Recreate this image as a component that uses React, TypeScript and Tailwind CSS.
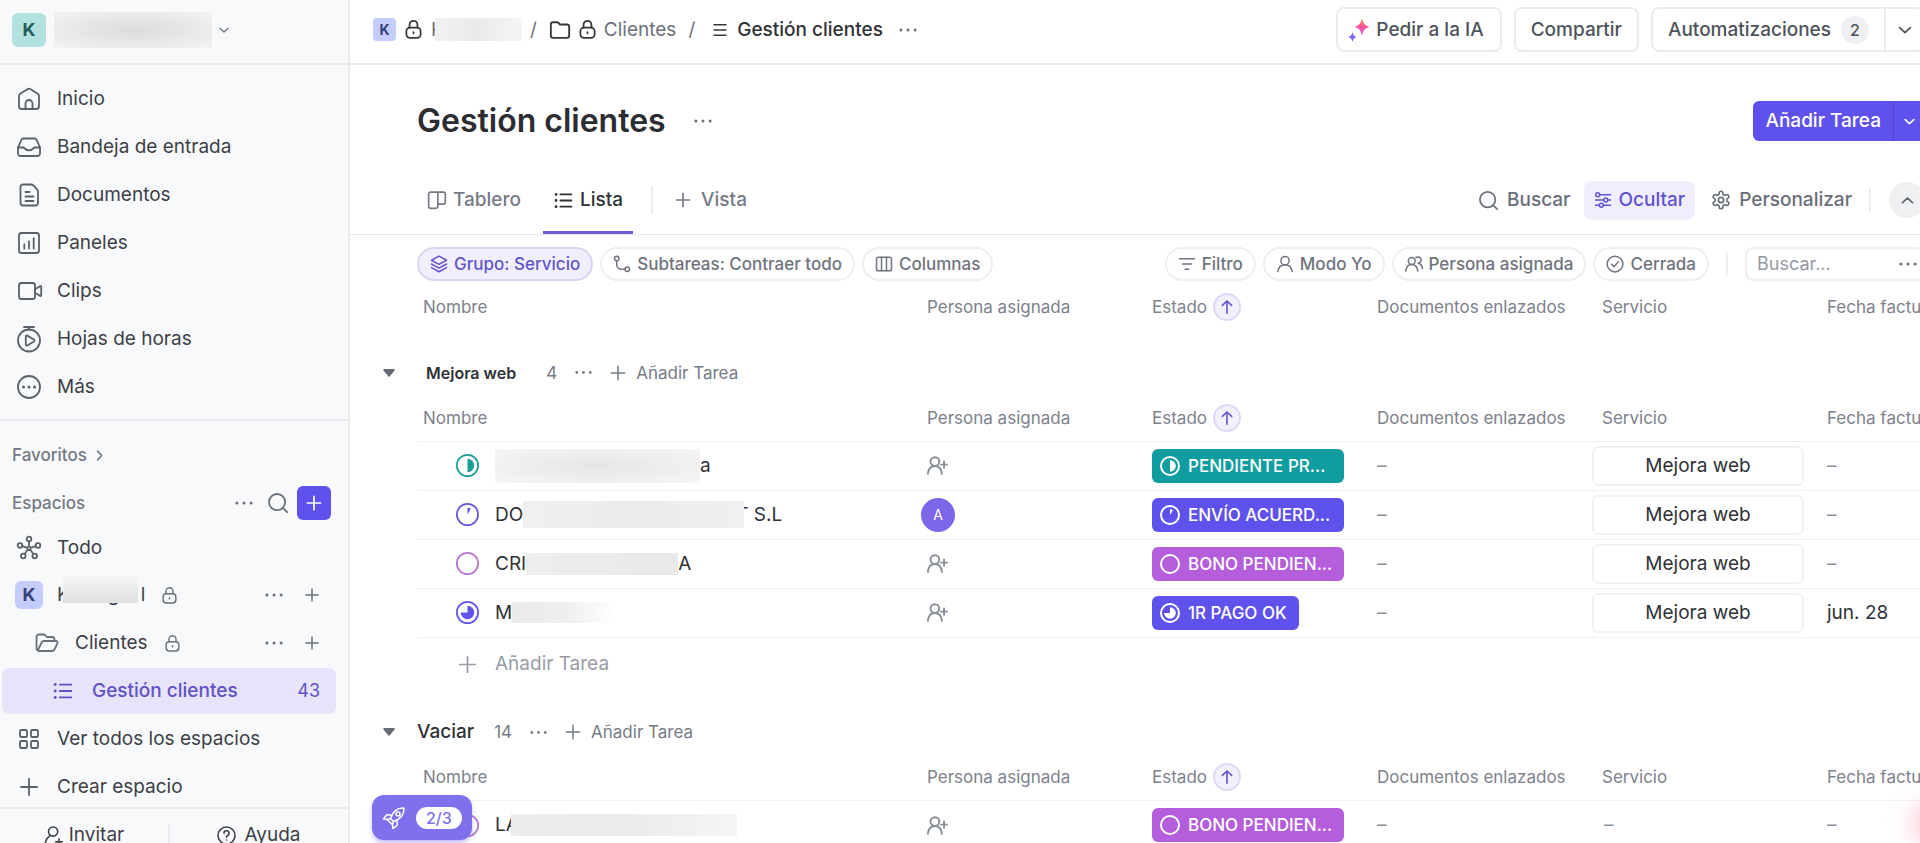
import { ReactNode } from 'react';

const ICONS: Record<string, ReactNode> = {
  home: (
    <>
      <path d="M2 9a2.6 2.6 0 0 1 1.2-2.2l7.2-4.6a3 3 0 0 1 3.2 0l7.2 4.6A2.6 2.6 0 0 1 22 9v10.3a2.7 2.7 0 0 1-2.7 2.7H4.7A2.7 2.7 0 0 1 2 19.3z" />
      <path d="M8.5 22v-5.5a3.5 3.5 0 0 1 7 0V22" />
    </>
  ),
  inbox: (
    <>
      <path d="M1 12.5 4.2 5.1A2.6 2.6 0 0 1 6.6 3.5h10.8a2.6 2.6 0 0 1 2.4 1.6L23 12.5v6a2.5 2.5 0 0 1-2.5 2.5h-17A2.5 2.5 0 0 1 1 18.5z" />
      <path d="M1 12.5h5c1.3 0 1.6.7 2.4 1.5.9.9 2 1.3 3.6 1.3s2.7-.4 3.6-1.3c.8-.8 1.1-1.5 2.4-1.5h5" />
    </>
  ),
  doc: (
    <>
      <path d="M6 1.5h8.2a3 3 0 0 1 2.1.9l3.8 4a3 3 0 0 1 .9 2.1V20a2.5 2.5 0 0 1-2.5 2.5H6A2.5 2.5 0 0 1 3.5 20V4A2.5 2.5 0 0 1 6 1.5z" />
      <path d="M8.5 9h4M8.5 13.5h8M8.5 18h8" />
    </>
  ),
  chart: (
    <>
      <rect x="2" y="2" width="20" height="20" rx="2.5" />
      <path d="M7.3 13.5v4M12 10.5v7M16.7 7.2v10.3" />
    </>
  ),
  video: (
    <>
      <rect x="2" y="4" width="16" height="16" rx="2.5" />
      <path d="M18 10.2 23 7.2a.7.7 0 0 1 1.2.6v8.4a.7.7 0 0 1-1.2.6L18 13.8z" />
    </>
  ),
  timer: (
    <>
      <circle cx="12" cy="13.5" r="11" />
      <path d="M7 0h10M12 0v2.5M8.8 9.5a1 1 0 0 1 1.5-.9l6.6 4a1 1 0 0 1 0 1.8l-6.6 4a1 1 0 0 1-1.5-.9z" />
    </>
  ),
  more: (
    <>
      <circle cx="12" cy="12" r="11" />
      <path d="M6.5 12h.01M12 12h.01M17.5 12h.01" strokeWidth="3" />
    </>
  ),
  hub: (
    <>
      <circle cx="12" cy="3" r="2.3" />
      <circle cx="3" cy="9.5" r="2.3" />
      <circle cx="21" cy="9.5" r="2.3" />
      <circle cx="6.3" cy="20" r="2.3" />
      <circle cx="17.7" cy="20" r="2.3" />
      <path d="M12 5.3v5M5.2 10.2l4.8 1.5M18.8 10.2 14 11.7M7.5 18l3.3-4.3M16.5 18l-3.3-4.3M12 10.3l2 1.4-.8 2.3h-2.4l-.8-2.3z" />
    </>
  ),
  grid: (
    <>
      <rect x="3" y="3" width="7" height="7" rx="1.3" />
      <rect x="14" y="3" width="7" height="7" rx="1.3" />
      <rect x="3" y="14" width="7" height="7" rx="1.3" />
      <rect x="14" y="14" width="7" height="7" rx="1.3" />
    </>
  ),
  plus: <path d="M12 4v16M4 12h16" />,
  list: (
    <>
      <path d="M8.5 5H21M8.5 12H21M8.5 19H21" />
      <path d="M3.5 5h.01M3.5 12h.01M3.5 19h.01" strokeWidth="3.2" />
    </>
  ),
  lines: <path d="M4 5h16M4 12h16M4 19h16" />,
  folder: <path d="M2 6a2.5 2.5 0 0 1 2.5-2.5h4.2c.8 0 1.5.4 2 1l1 1.5h7.8A2.5 2.5 0 0 1 22 8.5V18a2.5 2.5 0 0 1-2.5 2.5h-15A2.5 2.5 0 0 1 2 18z" />,
  folderOpen: (
    <path d="M2.7 19.5A2.5 2.5 0 0 1 1.5 17.3V6A2.5 2.5 0 0 1 4 3.5h4.5c.8 0 1.5.4 2 1L11.7 6H17a2.5 2.5 0 0 1 2.5 2.5V10M2.7 19.5l4-8A2.6 2.6 0 0 1 9 10h12a1.6 1.6 0 0 1 1.4 2.3l-3 6.2A2.6 2.6 0 0 1 17 20H4.5c-.8 0-1.4-.1-1.8-.5z" />
  ),
  lock: (
    <>
      <rect x="3" y="9.5" width="18" height="13" rx="4.5" />
      <path d="M7 9.5V6a5 5 0 0 1 10 0v3.5M12 15.2v1.6" />
    </>
  ),
  search: (
    <>
      <circle cx="11" cy="11" r="8.8" />
      <path d="m17.5 17.5 4.5 4.5" />
    </>
  ),
  dots: <path d="M2.5 12h.01M12 12h.01M21.5 12h.01" strokeWidth="4" />,
  down: <path d="m4 8.5 8 7.5 8-7.5" />,
  up: <path d="m4 15.5 8-7.5 8 7.5" />,
  right: <path d="m8.5 4 7.5 8-7.5 8" />,
  board: <path d="M4.5 2.5h15A2.5 2.5 0 0 1 22 5v9.5a2.5 2.5 0 0 1-2.5 2.5H13M4.5 2.5A2.5 2.5 0 0 0 2 5v14.5A2.5 2.5 0 0 0 4.5 22h6a2.5 2.5 0 0 0 2.5-2.5v-17" />,
  layers: (
    <>
      <path d="m12 1.5 10 5.5-10 5.5L2 7z" />
      <path d="m2 12 10 5.5L22 12M2 16.8l10 5.5 10-5.5" />
    </>
  ),
  subtasks: (
    <>
      <circle cx="5" cy="4.5" r="3" />
      <circle cx="19" cy="19" r="3" />
      <path d="M5 7.5V13a6 6 0 0 0 6 6h5" />
    </>
  ),
  columns: (
    <>
      <rect x="2" y="3" width="20" height="18" rx="2.5" />
      <path d="M8.7 3v18M15.3 3v18" />
    </>
  ),
  filter: <path d="M2 5h20M6 12h12M9.5 19h5" />,
  user: (
    <>
      <circle cx="12" cy="7.5" r="5.5" />
      <path d="M2.5 22c.8-5.5 4.5-9 9.5-9s8.7 3.5 9.5 9" />
    </>
  ),
  users: (
    <>
      <circle cx="9" cy="8" r="4.6" />
      <path d="M1 21.5c.5-5 3.5-8.8 8-8.8s7.5 3.8 8 8.8M14.5 3.5a4.3 4.3 0 1 1 3.2 7.6c3 .6 5 3.4 5.5 7" />
    </>
  ),
  userPlus: (
    <>
      <circle cx="9" cy="7.5" r="5" />
      <path d="M1 21.5c.5-5.5 3.5-9 8-9s7.5 3.5 8 9M19.5 7.5v7M16 11h7" />
    </>
  ),
  invite: (
    <>
      <circle cx="11.5" cy="7" r="5.8" />
      <path d="M12 22.5H3.5c-1.5 0-2-1-1.5-2.5C3 16.5 5.5 13.5 8 12M19 16v8M15 20h8" />
    </>
  ),
  help: (
    <>
      <circle cx="12" cy="12" r="10.8" />
      <path d="M8.8 9.2a3.2 3.2 0 1 1 4.6 2.9c-1 .5-1.4 1.1-1.4 2.2M12 17.6h.01" />
    </>
  ),
  check: (
    <>
      <circle cx="12" cy="12" r="10.5" />
      <path d="m7.5 12.3 3.2 3.2 5.8-6.5" />
    </>
  ),
  sliders: (
    <>
      <path d="M8 5h14M2 12h11M18.5 12H22M2 19h5M12.5 19H22" />
      <circle cx="5" cy="5" r="2.6" />
      <circle cx="15.8" cy="12" r="2.6" />
      <circle cx="9.8" cy="19" r="2.6" />
    </>
  ),
  gear: (
    <>
      <path d="M12.2 1.5h-.4a2 2 0 0 0-2 2v.7a2 2 0 0 1-1 1.7l-.4.2a2 2 0 0 1-2 0l-.6-.3a2 2 0 0 0-2.7.7l-.3.5a2 2 0 0 0 .7 2.7l.5.4a2 2 0 0 1 1 1.7v.5a2 2 0 0 1-1 1.7l-.5.3a2 2 0 0 0-.7 2.7l.3.5a2 2 0 0 0 2.7.7l.6-.3a2 2 0 0 1 2 0l.4.3a2 2 0 0 1 1 1.7v.6a2 2 0 0 0 2 2h.4a2 2 0 0 0 2-2v-.6a2 2 0 0 1 1-1.7l.4-.3a2 2 0 0 1 2 0l.6.3a2 2 0 0 0 2.7-.7l.3-.5a2 2 0 0 0-.7-2.7l-.5-.3a2 2 0 0 1-1-1.7v-.5a2 2 0 0 1 1-1.7l.5-.4a2 2 0 0 0 .7-2.7l-.3-.5a2 2 0 0 0-2.7-.7l-.6.3a2 2 0 0 1-2 0l-.4-.2a2 2 0 0 1-1-1.7v-.7a2 2 0 0 0-2-2z" />
      <circle cx="12" cy="12" r="3.2" />
    </>
  ),
  arrowUp: <path d="M12 21.5V3M5 9.5 12 3l7 6.5" />,
  rocket: (
    <>
      <path d="M8.5 12.5C10.5 6.5 15 2 21.3 2.1a.7.7 0 0 1 .7.7C22 9 17.5 13.5 11.5 15.5z" />
      <circle cx="16" cy="8" r="2" />
      <path d="M9.8 9.2 6 8.7a2 2 0 0 0-1.8.8L1.5 13l3.7.5M14.8 14.2l.5 3.8a2 2 0 0 1-.8 1.8L11 22.5l-.5-3.7M8.5 12.5l-3.3 1 5.3 5.3 1-3.3" />
    </>
  ),
};

function Icon({ name, size = 24, stroke = 2, className = '' }: { name: string; size?: number; stroke?: number; className?: string }) {
  return (
    <svg
      width={size}
      height={size}
      viewBox="0 0 24 24"
      fill="none"
      stroke="currentColor"
      strokeWidth={stroke}
      strokeLinecap="round"
      strokeLinejoin="round"
      className={`shrink-0 overflow-visible ${className}`}
      aria-hidden="true"
    >
      {ICONS[name]}
    </svg>
  );
}

// Pie slice used by the status icons
const SLICES: Record<string, string> = {
  half: 'M12 5a7 7 0 0 1 0 14z',
  start: 'M12 12V5a7 7 0 0 1 3.5 1z',
  most: 'M12 12V5a7 7 0 1 1-7 7z',
  empty: '',
};

function StatusIcon({ slice, size, stroke, className = '' }: { slice: string; size: number; stroke: number; className?: string }) {
  return (
    <svg width={size} height={size} viewBox="0 0 24 24" className={`shrink-0 ${className}`} aria-hidden="true">
      <circle cx="12" cy="12" r={12 - stroke / 2} fill="none" stroke="currentColor" strokeWidth={stroke} />
      <path d={SLICES[slice]} fill="currentColor" />
    </svg>
  );
}

const NAV = [
  { icon: 'home', label: 'Inicio' },
  { icon: 'inbox', label: 'Bandeja de entrada' },
  { icon: 'doc', label: 'Documentos' },
  { icon: 'chart', label: 'Paneles' },
  { icon: 'video', label: 'Clips' },
  { icon: 'timer', label: 'Hojas de horas' },
  { icon: 'more', label: 'Más' },
];

const STATUS = {
  pendiente: { label: 'PENDIENTE PR...', slice: 'half', pill: 'w-[192px] bg-[#109d9f]', text: 'text-[#1a9c97]' },
  envio: { label: 'ENVÍO ACUERD...', slice: 'start', pill: 'w-[192px] bg-[#5f52ec]', text: 'text-[#6457d8]' },
  bono: { label: 'BONO PENDIEN...', slice: 'empty', pill: 'w-[192px] bg-[#b45edc]', text: 'text-[#b574cf]' },
  pago: { label: '1R PAGO OK', slice: 'most', pill: 'bg-[#5f52ec]', text: 'text-[#6153ea]' },
};

type Task = {
  start: string;
  end?: string;
  blur: string;
  status: keyof typeof STATUS;
  avatar?: string;
  servicio?: string;
  fecha?: string;
};

const MEJORA: Task[] = [
  { start: '', end: 'a', blur: 'w-[205px] h-[34px] bg-radial from-[#e6e6e7] to-[#f6f6f7]', status: 'pendiente', servicio: 'Mejora web' },
  { start: 'DO', end: 'T S.L', blur: 'w-[221px] h-[27px] -mr-2 bg-linear-to-r from-[#f0f0f1] via-[#ebebec] to-[#f0f0f1]', status: 'envio', avatar: 'A', servicio: 'Mejora web' },
  { start: 'CRI', end: 'A', blur: 'w-[152px] h-[22px] bg-linear-to-r from-[#eeeeef] via-[#ebebed] to-[#e9e9ea]', status: 'bono', servicio: 'Mejora web' },
  { start: 'M', blur: 'w-[106px] h-[21px] bg-linear-to-r from-[#eaeaeb] via-[#efeff0] to-white', status: 'pago', servicio: 'Mejora web', fecha: 'jun. 28' },
];

const VACIAR: Task[] = [
  { start: 'LA', blur: 'w-[226px] h-[22px] -ml-2 bg-linear-to-r from-[#ededee] via-[#ebebec] to-[#f5f5f6]', status: 'bono' },
];

function HeadRow() {
  return (
    <thead>
      <tr className="h-[46px] text-left text-[17px] text-[#7d828c]">
        <th className="w-[500px] pl-1.5 font-normal">Nombre</th>
        <th className="w-[225px] pl-2.5 font-normal">Persona asignada</th>
        <th className="w-[225px] pl-2.5 font-normal">
          <span className="flex items-center gap-1.5">
            Estado
            <button aria-label="Orden ascendente" className="flex size-7 items-center justify-center rounded-full border-2 border-[#dedaf6] bg-[#f2f0fd] text-[#6355c8]">
              <Icon name="arrowUp" size={16} stroke={2.4} />
            </button>
          </span>
        </th>
        <th className="w-[225px] pl-2.5 font-normal">Documentos enlazados</th>
        <th className="w-[225px] pl-2.5 font-normal">Servicio</th>
        <th className="w-[225px] pl-2.5 font-normal">Fecha factura</th>
      </tr>
    </thead>
  );
}

function TaskRow({ task }: { task: Task }) {
  const status = STATUS[task.status];
  return (
    <tr className="h-[49px] border-t border-[#eff0f2] text-[19px] text-[#2f3237]">
      <td>
        <div className="flex items-center pl-[39px]">
          <StatusIcon slice={status.slice} size={23} stroke={1.8} className={status.text} />
          <div className="flex items-center pl-4">
            <span>{task.start}</span>
            <span className={`relative ${task.blur}`} />
            <span className="whitespace-pre">{task.end}</span>
          </div>
        </div>
      </td>
      <td>
        {task.avatar ? (
          <span className="ml-1 flex size-[34px] items-center justify-center rounded-full bg-[#7d66ea] text-sm text-white">{task.avatar}</span>
        ) : (
          <button aria-label="Asignar persona" className="ml-2.5 flex text-[#8a8f99]">
            <Icon name="userPlus" size={21} stroke={2.2} />
          </button>
        )}
      </td>
      <td className="pl-2.5">
        <button className={`flex h-[34px] items-center gap-2 rounded-md pr-3 pl-2 text-[17px] font-medium text-white ${status.pill}`}>
          <StatusIcon slice={status.slice} size={20} stroke={2.4} />
          <span className="whitespace-nowrap">{status.label}</span>
        </button>
      </td>
      <td className="pl-2.5 text-[#8a8f99]">–</td>
      <td>
        {task.servicio ? (
          <div className="flex h-10 w-[212px] items-center justify-center rounded-md border-2 border-[#f2f2f4]">{task.servicio}</div>
        ) : (
          <span className="pl-3 text-[#8a8f99]">–</span>
        )}
      </td>
      <td className="pl-2.5">{task.fecha ?? <span className="text-[#8a8f99]">–</span>}</td>
    </tr>
  );
}

function GroupTitle({ title, count, small }: { title: string; count: number; small?: boolean }) {
  return (
    <div className="flex h-[45px] items-center text-[17px] text-[#767b86]">
      <button aria-label="Contraer grupo" className="flex w-[34px]">
        <svg width="12" height="8" viewBox="0 0 12 8" fill="#656d7a" aria-hidden="true">
          <path d="M1.2 0h9.6a1 1 0 0 1 .8 1.6L6.8 7.2a1 1 0 0 1-1.6 0L.4 1.600A1 1 0 0 1 1.2 0z" />
        </svg>
      </button>
      {small ? (
        <h2 className="pr-2.5 pl-[9px] text-base font-semibold text-[#2f3237]">{title}</h2>
      ) : (
        <h2 className="text-[19px] font-medium text-[#2f3237]">{title}</h2>
      )}
      <span className="pl-5">{count}</span>
      <button aria-label="Opciones del grupo" className="pl-[18px]">
        <Icon name="dots" size={17} />
      </button>
      <button className="flex items-center gap-2 pl-4">
        <Icon name="plus" size={20} stroke={1.8} />
        Añadir Tarea
      </button>
    </div>
  );
}

function Pill({ icon, label, active }: { icon: string; label: string; active?: boolean }) {
  return (
    <button
      className={`flex h-[34px] shrink-0 items-center gap-1.5 rounded-full border-2 px-[11px] text-[17px] font-medium ${
        active ? 'border-[#d9d5f3] bg-[#f1effd] text-[#6355c8]' : 'border-[#eeeff1] text-[#6f747e]'
      }`}
    >
      <Icon name={icon} size={18} />
      {label}
    </button>
  );
}

function Sidebar() {
  return (
    <aside className="w-[350px] shrink-0 border-r-2 border-[#e9ebee] bg-[#f8f9fb] text-[19px] text-[#3d4046]">
      <div className="flex h-[65px] items-center border-b-2 border-[#e9ebee] px-3 pb-1">
        <span className="flex size-[34px] items-center justify-center rounded-md bg-[#b3e1df] text-lg font-bold text-[#245e5b]">K</span>
        <span className="ml-2 h-9 w-[158px] bg-radial from-[#dbdcdd] to-[#f2f3f4]" />
        <button aria-label="Cambiar espacio de trabajo" className="ml-1.5 text-[#6a6f79]">
          <Icon name="down" size={12} stroke={2.6} />
        </button>
      </div>
      <nav className="pt-2.5 pb-2">
        {NAV.map((n) => (
          <a key={n.label} href="#" className="flex h-12 items-center gap-4 pl-[17px]">
            <Icon name={n.icon} size={24} stroke={1.8} className="text-[#5c6068]" />
            {n.label}
          </a>
        ))}
      </nav>
      <div className="border-t-2 border-[#e9ebee] pt-2.5">
        <button className="flex h-12 items-center gap-1.5 pl-3 text-[17px] font-medium text-[#747984]">
          Favoritos
          <Icon name="right" size={13} stroke={3} />
        </button>
        <div className="flex h-12 items-center pr-[17px] pl-3 text-[#6b707b]">
          <span className="flex-1 text-[17px] font-medium text-[#747984]">Espacios</span>
          <button aria-label="Más opciones">
            <Icon name="dots" size={18} />
          </button>
          <button aria-label="Buscar espacio" className="ml-3.5">
            <Icon name="search" size={22} />
          </button>
          <button aria-label="Nuevo espacio" className="ml-2 flex size-[34px] items-center justify-center rounded-md bg-[#5f52ec] text-white">
            <Icon name="plus" size={20} />
          </button>
        </div>
        <a href="#" className="flex h-11 items-center gap-4 pb-0.5 pl-[17px]">
          <Icon name="hub" size={24} stroke={1.8} className="text-[#5c6068]" />
          Todo
        </a>
        <div className="flex h-12 items-center pr-[27px] pl-[15px] text-[#6b707b]">
          <span className="flex size-7 items-center justify-center rounded-md bg-[#c3ccfb] text-lg font-bold text-[#37407a]">K</span>
          <a href="#" className="relative flex items-center pl-3.5 text-[#3d4046]">
            K
            <span className="w-[71px] pl-[38px]">g</span>l
            <span className="absolute -top-1 left-5 h-[26px] w-[75px] bg-linear-to-b from-[#f3f4f5] to-[#dfe0e2]" />
          </a>
          <Icon name="lock" size={17} className="ml-4" />
          <button aria-label="Opciones del espacio" className="ml-auto">
            <Icon name="dots" size={18} />
          </button>
          <button aria-label="Añadir al espacio" className="ml-5">
            <Icon name="plus" size={18} />
          </button>
        </div>
        <div className="flex h-12 items-center pr-[27px] pl-[35px] text-[#6b707b]">
          <Icon name="folderOpen" size={24} stroke={1.8} />
          <a href="#" className="pl-4 text-[#3d4046]">
            Clientes
          </a>
          <Icon name="lock" size={17} className="ml-4" />
          <button aria-label="Opciones de la carpeta" className="ml-auto">
            <Icon name="dots" size={18} />
          </button>
          <button aria-label="Añadir a la carpeta" className="ml-5">
            <Icon name="plus" size={18} />
          </button>
        </div>
        <a href="#" className="mr-3 ml-0.5 flex h-12 items-center rounded-lg border-y border-[#f8f9fb] bg-[#e6e3fa] pr-4 pl-[50px] font-medium text-[#6052c6]">
          <Icon name="list" size={22} />
          <span className="flex-1 pl-[18px]">Gestión clientes</span>
          <span className="text-lg font-normal">43</span>
        </a>
        <a href="#" className="flex h-12 items-center gap-4 pl-[17px]">
          <Icon name="grid" size={24} stroke={1.8} className="text-[#5c6068]" />
          Ver todos los espacios
        </a>
        <button className="flex h-11 items-center gap-4 pt-1 pl-[17px]">
          <Icon name="plus" size={24} stroke={1.8} className="text-[#5c6068]" />
          Crear espacio
        </button>
      </div>
      <div className="flex h-[54px] items-center border-t-2 border-[#e9ebee]">
        <button className="flex h-6 w-[170px] items-center justify-center gap-1.5 border-r-2 border-[#e9ebee]">
          <Icon name="invite" size={19} />
          Invitar
        </button>
        <button className="flex flex-1 items-center justify-center gap-2">
          <Icon name="help" size={19} />
          Ayuda
        </button>
      </div>
    </aside>
  );
}

function TopBar() {
  return (
    <header className="flex h-[65px] items-center justify-between border-b-2 border-[#ebecef] pb-1 pl-[23px] text-[19px] text-[#6b7079]">
      <div className="flex items-center">
        <span className="flex size-[23px] items-center justify-center rounded-sm bg-[#c3ccfb] text-sm font-bold text-[#37407a]">K</span>
        <Icon name="lock" size={19} stroke={2.2} className="mx-2 text-[#34373c]" />
        <a href="#" className="flex items-center">
          <span className="w-1 overflow-hidden">K</span>
          <span className="h-[23px] w-[87px] bg-linear-to-r from-[#f2f2f3] via-[#eaeaec] to-[#f5f5f6]" />
        </a>
        <span className="pr-3 pl-2">/</span>
        <Icon name="folder" size={22} className="text-[#34373c]" />
        <Icon name="lock" size={19} stroke={2.2} className="mx-[7px] text-[#34373c]" />
        <a href="#">Clientes</a>
        <span className="px-3">/</span>
        <Icon name="lines" size={18} className="mx-1 text-[#34373c]" />
        <a href="#" className="px-1 font-medium text-[#2f3237]">
          Gestión clientes
        </a>
        <button aria-label="Opciones de la lista" className="pl-3">
          <Icon name="dots" size={18} />
        </button>
      </div>
      <div className="flex items-center gap-3 font-medium text-[#4f535b]">
        <button className="flex h-[45px] items-center gap-1.5 rounded-lg border-2 border-[#ebecef] pr-4 pl-2.5">
          <svg width="22" height="24" viewBox="0 0 22 24" aria-hidden="true">
            <defs>
              <linearGradient id="ia" x1="0" y1="0" x2="0" y2="1">
                <stop offset="0" stopColor="#ff9a4d" />
                <stop offset=".5" stopColor="#f9509e" />
                <stop offset="1" stopColor="#d558e6" />
              </linearGradient>
            </defs>
            <path d="M14 0c1 5 2.5 7.2 7.5 8.8C16.5 10.400 15 12.8 14 18c-1-5.200-2.500-7.600-7.5-9.200C11.5 7.2 13 5 14 0z" fill="url(#ia)" />
            <path d="M4.5 14c.6 2.8 1.5 4.1 4.3 5-2.8.9-3.7 2.2-4.3 5-.6-2.8-1.5-4.1-4.3-5 2.8-.9 3.7-2.2 4.3-5z" fill="#7b6cf0" />
          </svg>
          Pedir a la IA
        </button>
        <button className="h-[45px] rounded-lg border-2 border-[#ebecef] px-[15px]">Compartir</button>
        <div className="flex h-[45px] items-center rounded-lg border-2 border-[#ebecef]">
          <button className="flex h-full items-center gap-2.5 border-r-2 border-[#ebecef] px-[15px]">
            Automatizaciones
            <span className="flex size-7 items-center justify-center rounded-full bg-[#eff0f3] text-base">2</span>
          </button>
          <button aria-label="Más automatizaciones" className="flex h-full w-[37px] items-center justify-center">
            <Icon name="down" size={16} stroke={2.6} />
          </button>
        </div>
      </div>
    </header>
  );
}

export default function App() {
  return (
    <div className="relative flex h-screen overflow-hidden bg-white font-['Inter',sans-serif] leading-7">
      <Sidebar />
      <main className="-mr-[5px] min-w-0 flex-1">
        <TopBar />

        <div className="flex items-center justify-between pt-9 pl-[67px]">
          <div className="flex items-center gap-7">
            <h1 className="text-[32px] leading-10 font-semibold text-[#2b2d32]">Gestión clientes</h1>
            <button aria-label="Opciones de la vista" className="text-[#6b7079]">
              <Icon name="dots" size={18} />
            </button>
          </div>
          <div className="flex h-10 rounded-md bg-[#5f52ec] text-[19px] font-medium text-white">
            <button className="px-3">Añadir Tarea</button>
            <button aria-label="Más opciones de tarea" className="flex w-8 items-center justify-center border-l border-[#4f43cf]">
              <Icon name="down" size={13} stroke={3} />
            </button>
          </div>
        </div>

        <div className="mt-[25px] flex h-[69px] items-center justify-between border-b border-[#e6e8eb] pl-[67px] text-[19px] font-medium text-[#767b86]">
          <div className="flex h-full items-center">
            <button className="flex items-center gap-1.5 px-2.5">
              <Icon name="board" size={20} />
              Tablero
            </button>
            <button className="ml-3 flex h-full items-center gap-1.5 border-b-3 border-[#6a5ccf] px-2.5 pt-[3px] text-[#2f3237]">
              <Icon name="list" size={21} stroke={2.2} />
              Lista
            </button>
            <button className="ml-[18px] flex items-center gap-2 border-l-2 border-[#eceef0] pl-5">
              <Icon name="plus" size={20} />
              Vista
            </button>
          </div>
          <div className="flex items-center">
            <button className="flex items-center gap-2 text-[#6a6f79]">
              <Icon name="search" size={21} />
              Buscar
            </button>
            <button className="ml-3.5 flex h-[39px] items-center gap-1.5 rounded-lg bg-[#f0eefd] px-2.5 text-[#6052d2]">
              <Icon name="sliders" size={18} />
              Ocultar
            </button>
            <button className="ml-4 flex items-center gap-2 text-[#6a6f79]">
              <Icon name="gear" size={20} />
              Personalizar
            </button>
            <span className="ml-[17px] h-6 w-0.5 bg-[#eceef0]" />
            <button aria-label="Contraer cabecera" className="ml-[18px] flex size-9 items-center justify-center rounded-full bg-[#eff0f2] text-[#5d626c]">
              <Icon name="up" size={15} stroke={2.6} />
            </button>
          </div>
        </div>

        <div className="flex items-center justify-between pt-3 pl-[67px]">
          <div className="flex items-center gap-[7px]">
            <Pill icon="layers" label="Grupo: Servicio" active />
            <Pill icon="subtasks" label="Subtareas: Contraer todo" />
            <Pill icon="columns" label="Columnas" />
          </div>
          <div className="flex items-center gap-[7px]">
            <Pill icon="filter" label="Filtro" />
            <Pill icon="user" label="Modo Yo" />
            <Pill icon="users" label="Persona asignada" />
            <Pill icon="check" label="Cerrada" />
            <span className="mx-2.5 h-6 w-0.5 bg-[#eceef0]" />
            <div className="flex h-[34px] w-[180px] items-center rounded-lg border-2 border-[#eeeff1] pr-1.5 pl-2.5">
              <input aria-label="Buscar tareas" placeholder="Buscar..." className="min-w-0 flex-1 text-lg outline-none placeholder:text-[#9499a3]" />
              <button aria-label="Opciones de búsqueda" className="text-[#6a6f79]">
                <Icon name="dots" size={18} />
              </button>
            </div>
          </div>
        </div>

        <div className="pt-[3px] pl-[67px]">
          <table className="w-[1625px] table-fixed">
            <HeadRow />
          </table>
        </div>

        <section className="pt-5 pl-[33px]">
          <GroupTitle title="Mejora web" count={4} small />
          <div className="pl-[34px]">
            <table className="w-[1625px] table-fixed border-b border-[#eff0f2]">
              <HeadRow />
              <tbody>
                {MEJORA.map((t) => (
                  <TaskRow key={t.status} task={t} />
                ))}
              </tbody>
            </table>
            <button className="flex h-[53px] items-center gap-4 pl-[39px] text-[19px] text-[#989ca5]">
              <Icon name="plus" size={23} stroke={1.8} />
              Añadir Tarea
            </button>
          </div>
        </section>

        <section className="pt-[19px] pl-[33px]">
          <GroupTitle title="Vaciar" count={14} />
          <div className="pl-[34px]">
            <table className="w-[1625px] table-fixed">
              <HeadRow />
              <tbody>
                {VACIAR.map((t) => (
                  <TaskRow key={t.status} task={t} />
                ))}
              </tbody>
            </table>
          </div>
        </section>
      </main>

      <button className="absolute bottom-[3px] left-[372px] flex h-[45px] items-center gap-2.5 rounded-xl bg-[#7f70ee] px-2.5 text-white shadow-md shadow-[#7f70ee]/40">
        <Icon name="rocket" size={24} stroke={1.5} />
        <span className="rounded-full bg-white px-2.5 text-base leading-[22px] font-medium text-[#7f70ee]">2/3</span>
      </button>
      <span className="absolute -right-8 bottom-0 size-10 rounded-full bg-[#ffc9d5] blur-md" />
    </div>
  );
}
